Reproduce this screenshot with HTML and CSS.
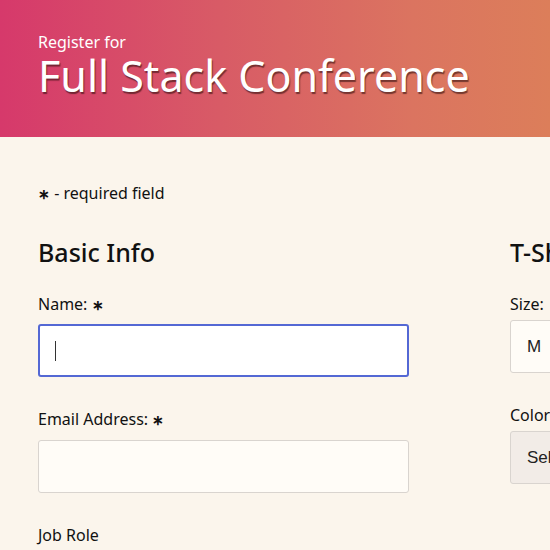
FILE: index.html
```html
<!DOCTYPE html>
<html lang="en">
<head>
<meta charset="utf-8">
<title>Register for Full Stack Conference</title>
<link rel="stylesheet" href="styles.css">
</head>
<body>
<header class="hero">
  <p class="hero-kicker">Register for</p>
  <h1 class="hero-title">Full Stack Conference</h1>
</header>
<main class="page">
  <p class="note"><span class="star">∗</span> - required field</p>
  <form class="form">
    <section class="col col-basic">
      <h2 class="section-title">Basic Info</h2>
      <div class="field">
        <label class="label label-tight" for="name">Name: <span class="star">∗</span></label>
        <div class="input focused" id="name"><span class="caret"></span></div>
      </div>
      <div class="field">
        <label class="label" for="email">Email Address: <span class="star">∗</span></label>
        <div class="input" id="email"></div>
      </div>
      <div class="field">
        <label class="label">Job Role</label>
      </div>
    </section>
    <section class="col col-shirt">
      <h2 class="section-title">T-Shirt Info</h2>
      <div class="field">
        <label class="label">Size:</label>
        <div class="select">M</div>
      </div>
      <div class="field">
        <label class="label">Color:</label>
        <div class="select disabled">Select a design theme above</div>
      </div>
    </section>
  </form>
</main>
</body>
</html>
```
FILE: styles.css
```css
html, body {
  margin: 0;
  padding: 0;
}
body {
  background: #fbf5ec;
  font-family: "Noto Sans", "Lato", sans-serif;
  color: #111;
  overflow: hidden;
  width: 550px;
  height: 550px;
}
.hero {
  height: 137px;
  box-sizing: border-box;
  padding: 33px 38px 0;
  background: linear-gradient(90deg, #d6396b 0%, #d85b66 40%, #db7460 75%, #dc7e5a 100%);
  color: #fff;
}
.hero-kicker {
  margin: 0;
  font-size: 16px;
  line-height: 18px;
}
.hero-title {
  margin: 0;
  font-weight: 400;
  font-size: 43px;
  line-height: 50px;
  white-space: nowrap;
  text-shadow: 1px 2px 1px rgba(50, 15, 15, 0.6);
}
.page {
  padding: 46px 38px 0;
  overflow: hidden;
}
.note {
  margin: 0;
  font-size: 16px;
  line-height: 20px;
}
.star {
  font-weight: 700;
  font-size: 0.85em;
}
.form {
  display: grid;
  grid-template-columns: 371px 371px;
  column-gap: 101px;
  margin-top: 33px;
}
.section-title {
  margin: 0 0 27px;
  font-size: 25px;
  line-height: 30px;
  font-weight: 500;
  white-space: nowrap;
}
.field {
  margin-bottom: 32px;
}
.label {
  display: block;
  font-size: 16px;
  line-height: 20px;
  margin-bottom: 10px;
  white-space: nowrap;
}
.label-tight {
  margin-bottom: 9px;
}
.input {
  box-sizing: border-box;
  height: 53px;
  border: 1px solid #d9d4cf;
  border-radius: 3px;
  background: #fffcf7;
}
.input.focused {
  border: 2px solid #5468d4;
  background: #fff;
  display: flex;
  align-items: center;
  padding-left: 15px;
}
.caret {
  width: 1px;
  height: 20px;
  background: #333;
}
.col-shirt .label {
  margin-bottom: 6px;
}
.select {
  box-sizing: border-box;
  height: 53px;
  border: 1px solid #d9d4cf;
  border-radius: 3px;
  background: #fffcf7;
  font-family: "Liberation Sans", Arial, sans-serif;
  font-size: 17px;
  color: #222;
  display: flex;
  align-items: center;
  padding-left: 16px;
  white-space: nowrap;
}
.select.disabled {
  background: #f2ece7;
}
```
